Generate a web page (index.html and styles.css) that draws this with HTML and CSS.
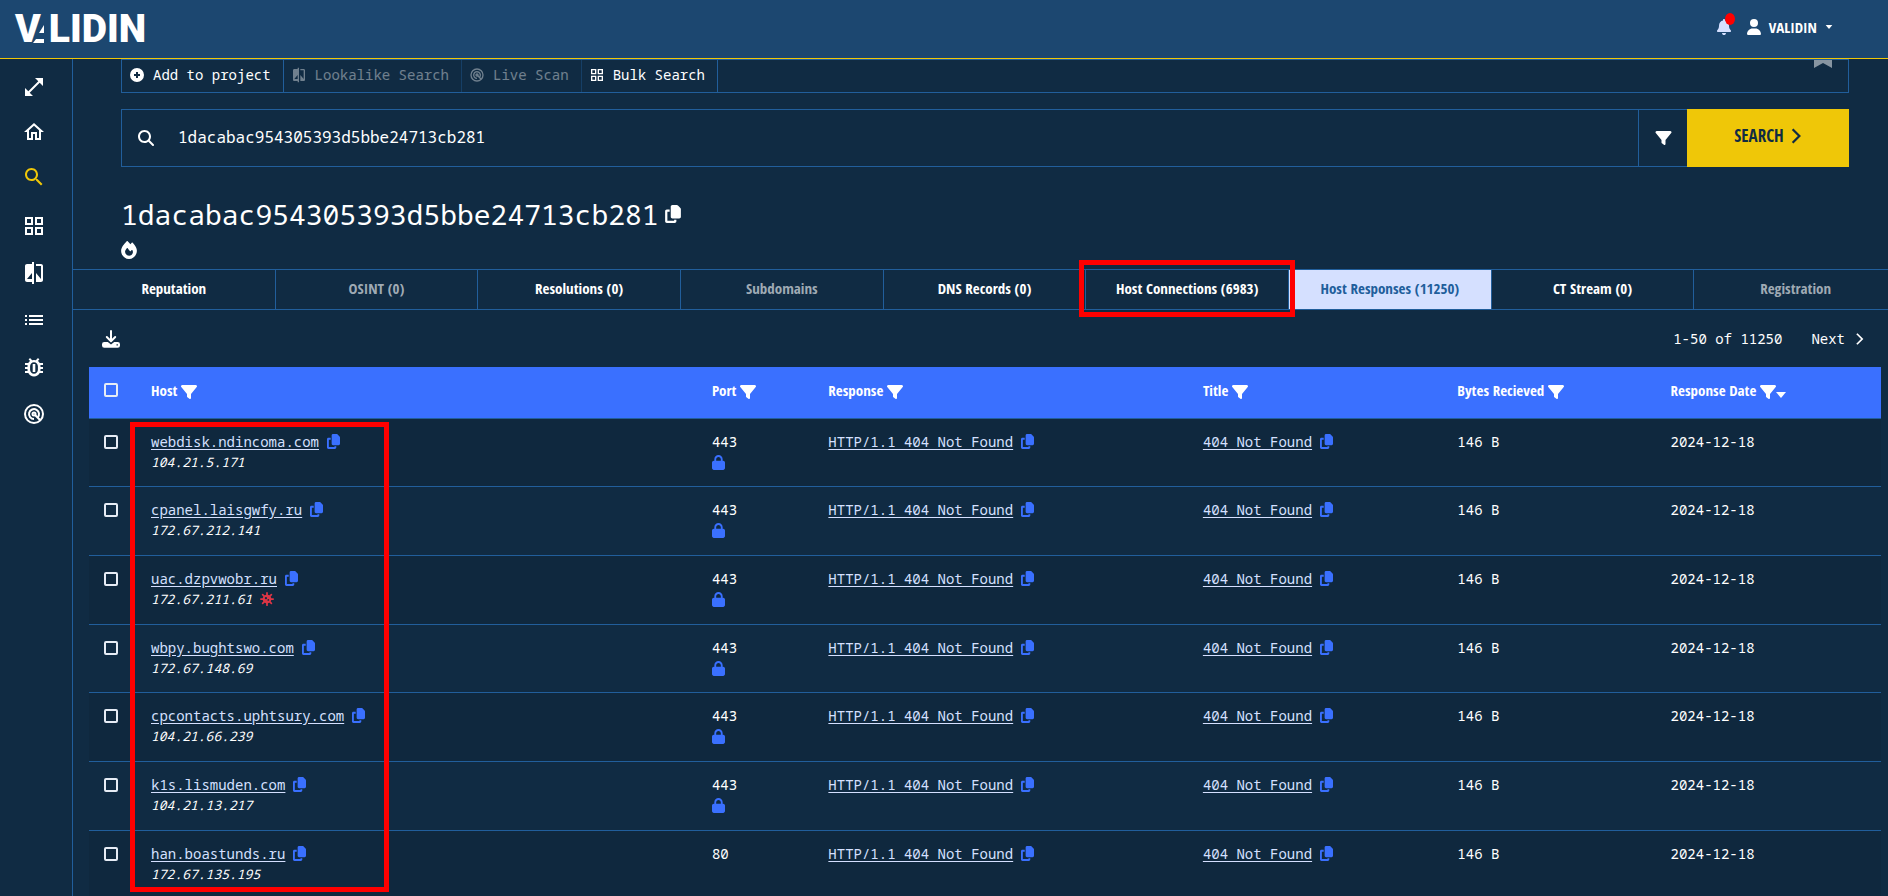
FILE: index.html
```
<!DOCTYPE html>
<html lang="en">
<head>
<meta charset="utf-8">
<title>Validin</title>
<link rel="stylesheet" href="styles.css">
</head>
<body>
<svg class="sprite" aria-hidden="true">
  <symbol id="expand" viewBox="0 0 24 24"><path d="M21 11V3h-8l3.29 3.29-10 10L3 13v8h8l-3.29-3.29 10-10z"/></symbol>
  <symbol id="home" viewBox="0 0 24 24"><path d="M12 5.69l5 4.5V18h-2v-6H9v6H7v-7.81l5-4.5M12 3L2 12h3v8h6v-6h2v6h6v-8h3L12 3z"/></symbol>
  <symbol id="find" viewBox="0 0 24 24"><path d="M15.5 14h-.79l-.28-.27C15.41 12.59 16 11.11 16 9.5 16 5.91 13.09 3 9.5 3S3 5.91 3 9.5 5.91 16 9.5 16c1.61 0 3.09-.59 4.23-1.57l.27.28v.79l5 4.99L20.49 19l-4.99-5zm-6 0C7.01 14 5 11.99 5 9.5S7.01 5 9.5 5 14 7.01 14 9.5 11.99 14 9.5 14z"/></symbol>
  <symbol id="grid" viewBox="0 0 24 24"><path d="M3 3v8h8V3H3zm6 6H5V5h4v4zm-6 4v8h8v-8H3zm6 6H5v-4h4v4zm4-16v8h8V3h-8zm6 6h-4V5h4v4zm-6 4v8h8v-8h-8zm6 6h-4v-4h4v4z"/></symbol>
  <symbol id="compare" viewBox="0 0 24 24"><path d="M10 3H5c-1.1 0-2 .9-2 2v14c0 1.1.9 2 2 2h5v2h2V1h-2v2zm0 15H5l5-6v6zm9-15h-5v2h5v13l-5-6v9h5c1.1 0 2-.9 2-2V5c0-1.1-.9-2-2-2z"/></symbol>
  <symbol id="list" viewBox="0 0 24 24"><path d="M3 13h2v-2H3v2zm0 4h2v-2H3v2zm0-8h2V7H3v2zm4 4h14v-2H7v2zm0 4h14v-2H7v2zM7 7v2h14V7H7z"/></symbol>
  <symbol id="bug" viewBox="0 0 24 24"><path fill-rule="evenodd" d="M21 8h-3.3c-.5-.9-1.1-1.5-1.9-2l1.6-1.6L16 3l-2.2 2.2a6.5 6.5 0 0 0-3.6 0L8 3 6.600 4.400 8.200 6c-.8.5-1.400 1.100-1.900 2H3v2h2.600L5.500 11v1H3v2h2.500v1l.1 1H3v2h3.300a6.500 6.500 0 0 0 11.400 0H21v-2h-2.600l.1-1v-1H21v-2h-2.500v-1l-.1-1H21zM12 7.200c2.200 0 3.900 1.700 3.900 4v3.600c0 2.300-1.700 4-3.900 4s-3.900-1.700-3.900-4v-3.600c0-2.300 1.700-4 3.900-4z"/><rect x="10.700" y="9" width="2.600" height="8"/></symbol>
  <symbol id="radar" viewBox="0 0 24 24"><g fill="none" stroke="currentColor" stroke-width="2"><circle cx="12" cy="12" r="9"/><path d="M15.600 15.600a5 5 0 1 0-3.600 1.500"/><circle cx="12" cy="12" r="1.500"/><path d="M12.800 12.800l5.500 5.500"/></g></symbol>
  <symbol id="plus" viewBox="0 0 16 16"><path fill-rule="evenodd" d="M8 1a7 7 0 1 1 0 14A7 7 0 0 1 8 1zM7 5v2H5v2h2v2h2V9h2V7H9V5z"/></symbol>
  <symbol id="loupe" viewBox="0 0 512 512"><path d="M416 208c0 45.900-14.900 88.300-40 122.700L502.600 457.400c12.500 12.500 12.500 32.800 0 45.300s-32.800 12.500-45.300 0L330.700 376c-34.400 25.200-76.800 40-122.700 40C93.100 416 0 322.900 0 208S93.100 0 208 0S416 93.100 416 208zM208 352a144 144 0 1 0 0-288 144 144 0 1 0 0 288z"/></symbol>
  <symbol id="filter" viewBox="0 32 512 448"><path d="M3.900 54.900C10.500 40.900 24.500 32 40 32H472c15.500 0 29.500 8.900 36.100 22.900s4.600 30.500-5.200 42.500L320 320.900V448c0 12.100-6.800 23.200-17.700 28.600s-23.800 4.300-33.500-3l-64-48c-8.100-6-12.800-15.500-12.800-25.600V320.900L9 97.300C-.7 85.400-2.800 68.800 3.900 54.900z"/></symbol>
  <symbol id="copy" viewBox="0 0 448 512"><path d="M208 0H332.100c12.700 0 24.900 5.100 33.900 14.100l67.900 67.900c9 9 14.100 21.200 14.100 33.900V336c0 26.500-21.500 48-48 48H208c-26.500 0-48-21.500-48-48V48c0-26.500 21.500-48 48-48zM48 128h80v64H64V448H256V416h64v48c0 26.500-21.500 48-48 48H48c-26.500 0-48-21.500-48-48V176c0-26.500 21.500-48 48-48z"/></symbol>
  <symbol id="lock" viewBox="0 0 448 512"><path d="M144 144v48H304V144c0-44.200-35.800-80-80-80s-80 35.800-80 80zM80 192V144C80 64.500 144.500 0 224 0s144 64.500 144 144v48h16c35.300 0 64 28.700 64 64V448c0 35.300-28.700 64-64 64H64c-35.300 0-64-28.700-64-64V256c0-35.300 28.700-64 64-64H80z"/></symbol>
  <symbol id="bell" viewBox="0 0 448 512"><path d="M224 0c-17.700 0-32 14.300-32 32V51.200C119 66 64 130.600 64 208v18.800c0 47-17.300 92.400-48.500 127.600l-7.400 8.300c-8.400 9.400-10.400 22.900-5.300 34.400S19.400 416 32 416H416c12.600 0 24-7.400 29.200-18.900s3.100-25-5.300-34.400l-7.400-8.300C401.300 319.200 384 273.900 384 226.800V208c0-77.400-55-142-128-156.800V32c0-17.700-14.300-32-32-32zm45.300 493.300c12-12 18.700-28.300 18.700-45.300H160c0 17 6.700 33.300 18.700 45.300s28.300 18.700 45.300 18.700s33.300-6.700 45.300-18.700z"/></symbol>
  <symbol id="user" viewBox="0 0 448 512"><path d="M224 256A128 128 0 1 0 224 0a128 128 0 1 0 0 256zm-45.700 48C79.800 304 0 383.800 0 482.300C0 498.700 13.300 512 29.700 512H418.300c16.400 0 29.700-13.300 29.700-29.700C448 383.800 368.200 304 269.700 304H178.300z"/></symbol>
  <symbol id="fire" viewBox="0 0 448 512"><path d="M159.300 5.400c7.800-7.300 19.900-7.200 27.700 .1c27.600 25.900 53.500 53.800 77.700 84c11-14.400 23.500-30.100 37-42.900c7.900-7.400 20.100-7.400 28 .1c34.600 33 63.900 76.600 84.500 118c20.300 40.800 33.800 82.500 33.800 111.900C448 404.200 348.200 512 224 512C98.400 512 0 404.100 0 276.500c0-38.400 17.800-85.300 45.400-131.700C73.300 97.700 112.700 48.600 159.300 5.400zM225.700 416c25.300 0 47.700-7 68.800-21c42.100-29.400 53.400-88.200 28.100-134.400c-4.500-9-16-9.600-22.500-2l-25.200 29.300c-6.600 7.600-18.500 7.400-24.700-.5c-16.500-21-46-58.500-62.800-79.800c-6.300-8-18.300-8.100-24.700-.1c-33.800 42.500-50.800 69.300-50.800 99.400C112 375.400 162.600 416 225.700 416z"/></symbol>
  <symbol id="download" viewBox="0 0 18 18"><path d="M9 1v9.500M4.800 7l4.200 4.200L13.200 7" fill="none" stroke="currentColor" stroke-width="2" stroke-linecap="round" stroke-linejoin="round"/><path fill-rule="evenodd" d="M2.300 12h3.500L9 14.500l3.200-2.500h3.500a2.300 2.300 0 0 1 2.300 2.300v1.200a2.300 2.300 0 0 1-2.300 2.300H2.300A2.300 2.300 0 0 1 0 15.500v-1.200A2.300 2.300 0 0 1 2.300 12zm12.200 2.200v1.400h1.400v-1.400z"/></symbol>
  <symbol id="chevron" viewBox="0 0 10 16"><path d="M2 2l6 6-6 6" fill="none" stroke="currentColor" stroke-width="2"/></symbol>
  <symbol id="caret" viewBox="0 0 10 6"><path d="M0 0h10L5 6z"/></symbol>
  <symbol id="virus" viewBox="0 0 16 16"><g fill="none" stroke="currentColor" stroke-linecap="round"><path stroke-width="2" d="M8 1v14M1 8h14M3 3l10 10M13 3L3 13"/></g><circle cx="8" cy="8" r="5"/><circle class="spot" cx="6.800" cy="7" r="1.300"/><circle class="spot" cx="9.500" cy="9" r="1"/></symbol>
</svg>

<header class="topbar">
  <a class="logo" href="#" aria-label="Validin"><span>V</span><svg class="logo-mark" viewBox="0 0 12 20"><path d="M12 2v8H7zM4 16h8v4H1z"/></svg><span>LIDIN</span></a>
  <div class="account">
    <button class="bell" aria-label="Notifications"><svg width="14" height="16"><use href="#bell"/></svg><span class="dot"></span></button>
    <button class="user"><svg width="14" height="16"><use href="#user"/></svg><span>VALIDIN</span><svg width="8" height="4"><use href="#caret"/></svg></button>
  </div>
</header>

<div class="shell">
  <nav class="sidebar" aria-label="Main">
    <div class="nav-top">
      <a href="#" aria-label="Expand"><svg><use href="#expand"/></svg></a>
      <a href="#" aria-label="Home"><svg><use href="#home"/></svg></a>
      <a href="#" aria-label="Search" class="current"><svg><use href="#find"/></svg></a>
    </div>
    <div class="nav-tools">
      <a href="#" aria-label="Bulk search"><svg><use href="#grid"/></svg></a>
      <a href="#" aria-label="Lookalikes"><svg><use href="#compare"/></svg></a>
      <a href="#" aria-label="Projects"><svg><use href="#list"/></svg></a>
      <a href="#" aria-label="Threats"><svg><use href="#bug"/></svg></a>
      <a href="#" aria-label="Live scan"><svg><use href="#radar"/></svg></a>
    </div>
  </nav>

  <main class="main">
    <section class="query">
      <div class="toolbar">
        <button><svg><use href="#plus"/></svg>Add to project</button>
        <button disabled><svg><use href="#compare"/></svg>Lookalike Search</button>
        <button disabled><svg><use href="#radar"/></svg>Live Scan</button>
        <button><svg><use href="#grid"/></svg>Bulk Search</button>
        <svg class="bookmark" viewBox="0 0 18 8"><path d="M0 0h18v8L9 3 0 8z"/></svg>
      </div>
      <form class="searchbox">
        <label for="q" aria-label="Search"><svg width="16" height="16"><use href="#loupe"/></svg></label>
        <input id="q" type="text" value="1dacabac954305393d5bbe24713cb281">
        <button type="button" class="filter-btn" aria-label="Filter"><svg width="17" height="14"><use href="#filter"/></svg></button>
        <button type="button" class="search-btn">SEARCH <svg width="12" height="18"><use href="#chevron"/></svg></button>
      </form>
      <div class="title"><h1>1dacabac954305393d5bbe24713cb281</h1><button aria-label="Copy"><svg width="16" height="18"><use href="#copy"/></svg></button></div>
      <div class="flags"><svg width="16" height="18"><use href="#fire"/></svg></div>
    </section>

    <div class="tabs" role="tablist">
      <button role="tab">Reputation</button>
      <button role="tab" disabled>OSINT (0)</button>
      <button role="tab">Resolutions (0)</button>
      <button role="tab" disabled>Subdomains</button>
      <button role="tab">DNS Records (0)</button>
      <button role="tab" class="marked">Host Connections (6983)<span class="mark"></span></button>
      <button role="tab" class="active" aria-selected="true">Host Responses (11250)</button>
      <button role="tab">CT Stream (0)</button>
      <button role="tab" disabled>Registration</button>
    </div>

    <div class="pager">
      <button aria-label="Download"><svg width="18" height="18"><use href="#download"/></svg></button>
      <span class="range">1-50 of 11250</span>
      <button class="next">Next <svg width="9" height="14"><use href="#chevron"/></svg></button>
    </div>

    <div class="results">
      <table>
        <colgroup><col class="c-check"><col class="c-host"><col class="c-port"><col class="c-resp"><col class="c-title"><col class="c-bytes"><col></colgroup>
        <thead>
          <tr>
            <th><input type="checkbox" aria-label="Select all"></th>
            <th>Host <svg><use href="#filter"/></svg></th>
            <th>Port <svg><use href="#filter"/></svg></th>
            <th>Response <svg><use href="#filter"/></svg></th>
            <th>Title <svg><use href="#filter"/></svg></th>
            <th>Bytes Recieved <svg><use href="#filter"/></svg></th>
            <th>Response Date <svg><use href="#filter"/></svg><svg class="sort"><use href="#caret"/></svg></th>
          </tr>
        </thead>
        <tbody>
          <tr>
            <td><input type="checkbox" aria-label="Select row"></td>
            <td><div class="line"><a href="#">webdisk.ndincoma.com</a><svg><use href="#copy"/></svg></div><div class="ip">104.21.5.171</div></td>
            <td><div class="line">443</div><svg class="lock"><use href="#lock"/></svg></td>
            <td><div class="line"><a href="#">HTTP/1.1 404 Not Found</a><svg><use href="#copy"/></svg></div></td>
            <td><div class="line"><a href="#">404 Not Found</a><svg><use href="#copy"/></svg></div></td>
            <td><div class="line">146 B</div></td>
            <td><div class="line">2024-12-18</div></td>
          </tr>
          <tr>
            <td><input type="checkbox" aria-label="Select row"></td>
            <td><div class="line"><a href="#">cpanel.laisgwfy.ru</a><svg><use href="#copy"/></svg></div><div class="ip">172.67.212.141</div></td>
            <td><div class="line">443</div><svg class="lock"><use href="#lock"/></svg></td>
            <td><div class="line"><a href="#">HTTP/1.1 404 Not Found</a><svg><use href="#copy"/></svg></div></td>
            <td><div class="line"><a href="#">404 Not Found</a><svg><use href="#copy"/></svg></div></td>
            <td><div class="line">146 B</div></td>
            <td><div class="line">2024-12-18</div></td>
          </tr>
          <tr>
            <td><input type="checkbox" aria-label="Select row"></td>
            <td><div class="line"><a href="#">uac.dzpvwobr.ru</a><svg><use href="#copy"/></svg></div><div class="ip">172.67.211.61<svg class="virus"><use href="#virus"/></svg></div></td>
            <td><div class="line">443</div><svg class="lock"><use href="#lock"/></svg></td>
            <td><div class="line"><a href="#">HTTP/1.1 404 Not Found</a><svg><use href="#copy"/></svg></div></td>
            <td><div class="line"><a href="#">404 Not Found</a><svg><use href="#copy"/></svg></div></td>
            <td><div class="line">146 B</div></td>
            <td><div class="line">2024-12-18</div></td>
          </tr>
          <tr>
            <td><input type="checkbox" aria-label="Select row"></td>
            <td><div class="line"><a href="#">wbpy.bughtswo.com</a><svg><use href="#copy"/></svg></div><div class="ip">172.67.148.69</div></td>
            <td><div class="line">443</div><svg class="lock"><use href="#lock"/></svg></td>
            <td><div class="line"><a href="#">HTTP/1.1 404 Not Found</a><svg><use href="#copy"/></svg></div></td>
            <td><div class="line"><a href="#">404 Not Found</a><svg><use href="#copy"/></svg></div></td>
            <td><div class="line">146 B</div></td>
            <td><div class="line">2024-12-18</div></td>
          </tr>
          <tr>
            <td><input type="checkbox" aria-label="Select row"></td>
            <td><div class="line"><a href="#">cpcontacts.uphtsury.com</a><svg><use href="#copy"/></svg></div><div class="ip">104.21.66.239</div></td>
            <td><div class="line">443</div><svg class="lock"><use href="#lock"/></svg></td>
            <td><div class="line"><a href="#">HTTP/1.1 404 Not Found</a><svg><use href="#copy"/></svg></div></td>
            <td><div class="line"><a href="#">404 Not Found</a><svg><use href="#copy"/></svg></div></td>
            <td><div class="line">146 B</div></td>
            <td><div class="line">2024-12-18</div></td>
          </tr>
          <tr>
            <td><input type="checkbox" aria-label="Select row"></td>
            <td><div class="line"><a href="#">k1s.lismuden.com</a><svg><use href="#copy"/></svg></div><div class="ip">104.21.13.217</div></td>
            <td><div class="line">443</div><svg class="lock"><use href="#lock"/></svg></td>
            <td><div class="line"><a href="#">HTTP/1.1 404 Not Found</a><svg><use href="#copy"/></svg></div></td>
            <td><div class="line"><a href="#">404 Not Found</a><svg><use href="#copy"/></svg></div></td>
            <td><div class="line">146 B</div></td>
            <td><div class="line">2024-12-18</div></td>
          </tr>
          <tr>
            <td><input type="checkbox" aria-label="Select row"></td>
            <td><div class="line"><a href="#">han.boastunds.ru</a><svg><use href="#copy"/></svg></div><div class="ip">172.67.135.195</div></td>
            <td><div class="line">80</div></td>
            <td><div class="line"><a href="#">HTTP/1.1 404 Not Found</a><svg><use href="#copy"/></svg></div></td>
            <td><div class="line"><a href="#">404 Not Found</a><svg><use href="#copy"/></svg></div></td>
            <td><div class="line">146 B</div></td>
            <td><div class="line">2024-12-18</div></td>
          </tr>
        </tbody>
      </table>
      <span class="mark host-mark"></span>
    </div>
  </main>
</div>
</body>
</html>
```
FILE: styles.css
```
:root {
  --bg: #102b43;
  --bar: #1c4770;
  --line: #215e9b;
  --blue: #3a70ff;
  --yellow: #efc708;
  --pale: #d5e0ff;
  --mono: "Noto Sans Mono", "DejaVu Sans Mono", monospace;
  --cond: "Open Sans Condensed", "Roboto Condensed", "Open Sans", sans-serif;
}

* { box-sizing: border-box; }

body {
  margin: 0;
  height: 100vh;
  overflow: hidden;
  display: flex;
  flex-direction: column;
  background: var(--bg);
  color: #fff;
  font: 14px/20px var(--mono);
}

svg { fill: currentColor; flex: none; }
.sprite { position: absolute; width: 0; height: 0; }

button {
  margin: 0;
  padding: 0;
  border: 0;
  background: none;
  color: inherit;
  font: inherit;
}

/* Top bar */
.topbar {
  flex: none;
  display: flex;
  align-items: center;
  justify-content: space-between;
  height: 59px;
  padding: 0 55px 0 15px;
  background: var(--bar);
  border-bottom: 1px solid var(--yellow);
}

.logo {
  display: flex;
  align-items: center;
  color: #fff;
  font: 900 39px/40px Roboto, sans-serif;
  text-decoration: none;
}
.logo-mark { width: 12px; height: 20px; margin: 8px 5px 0 -9px; }

.account { display: flex; gap: 16px; align-items: center; padding-bottom: 5px; }
.bell { position: relative; display: flex; color: var(--pale); }
.dot {
  position: absolute;
  top: -6px;
  right: -4px;
  width: 10px;
  height: 12px;
  border-radius: 50%;
  background: #f00;
}
.user { display: flex; align-items: center; gap: 8px; font: bold 15px/20px var(--cond); }

/* Sidebar */
.shell { flex: 1; min-height: 0; display: flex; }
.sidebar {
  flex: none;
  width: 73px;
  padding: 5px 16px 0 0;
  border-right: 1px solid var(--line);
}
.sidebar a { display: flex; align-items: center; justify-content: center; color: #fff; }
.sidebar svg { width: 24px; height: 24px; margin-left: 12px; }
.nav-top a { height: 45px; }
.nav-tools { padding-top: 3px; }
.nav-tools a { height: 47px; }
.sidebar .current { color: var(--yellow); }

.main { flex: 1; min-width: 0; overflow: hidden; }

/* Query area */
.query { padding: 0 39px 0 48px; }

.toolbar {
  display: flex;
  height: 34px;
  border: 1px solid var(--line);
}
.toolbar button {
  display: flex;
  align-items: center;
  gap: 8px;
  padding: 0 12px 2px 7px;
  border-right: 1px solid var(--line);
}
.toolbar button svg { width: 16px; height: 16px; }
.toolbar button:disabled { opacity: .4; }
.bookmark { width: 18px; height: 8px; margin: 0 16px 0 auto; color: #8795a1; }

.searchbox {
  display: flex;
  height: 58px;
  margin: 16px 0 0;
  border: 1px solid var(--line);
  border-right: 0;
}
.searchbox label { display: flex; align-items: center; padding: 0 22px 0 16px; }
.searchbox input {
  flex: 1;
  min-width: 0;
  padding: 0 2px 2px;
  border: 0;
  outline: 0;
  background: none;
  color: #fff;
  font: 16px/24px var(--mono);
}
.filter-btn {
  display: flex;
  align-items: center;
  justify-content: center;
  width: 49px;
  border-left: 1px solid var(--line);
}
.search-btn {
  display: flex;
  align-items: center;
  justify-content: center;
  gap: 6px;
  width: 162px;
  margin: -1px 0;
  padding-bottom: 4px;
  background: var(--yellow);
  color: #102b43;
  font: bold 17px/24px var(--cond);
}

.title { display: flex; align-items: center; gap: 6px; margin-top: 26px; }
.title h1 { margin: 0; font: 28px/42px var(--mono); }
.title button { display: flex; }
.flags { display: flex; padding: 6px 0 10px; }

/* Tabs */
.tabs {
  display: grid;
  grid-template-columns: repeat(9, 1fr);
  margin-right: -9px;
}
.tabs button {
  position: relative;
  height: 41px;
  padding-bottom: 4px;
  border: solid var(--line);
  border-width: 1px 1px 1px 0;
  font: bold 15px/20px var(--cond);
}
.tabs button:last-child { border-right: 0; }
.tabs button:disabled { color: #9faab4; }
.tabs .active { background: var(--pale); color: #215e9b; }
.tabs .marked { z-index: 1; }

.mark { position: absolute; border: 5px solid #f00; pointer-events: none; }
.marked .mark { inset: -10px -7px -8px -7px; }
.host-mark { top: 55px; left: 41px; width: 259px; height: 470px; }

/* Pager */
.pager { display: flex; align-items: center; height: 57px; padding: 1px 24px 0 29px; }
.pager button { display: flex; align-items: center; gap: 10px; }
.range { margin-left: auto; }
.pager .next { margin-left: 29px; }

/* Results */
.results { position: relative; margin: 0 7px 0 16px; }
table { width: 100%; table-layout: fixed; border-collapse: collapse; }
.c-check { width: 54px; }
.c-host { width: 31.3%; }
.c-port { width: 6.5%; }
.c-resp { width: 20.9%; }
.c-title { width: 14.2%; }
.c-bytes { width: 11.9%; }

th, td { padding: 0 8px; text-align: left; border-bottom: 1px solid var(--line); }
th {
  height: 51px;
  padding-bottom: 5px;
  background: var(--blue);
  font: bold 15px/20px var(--cond);
}
th svg { width: 16px; height: 14px; vertical-align: middle; }
th .sort { width: 10px; height: 6px; margin-top: 7px; }

td { height: 69px; padding-top: 12px; vertical-align: top; }
tbody tr:nth-child(3n+1) td { height: 68px; }
tbody tr:nth-child(odd) { background: #0f283e; }
th:first-child, td:first-child { padding-left: 15px; }

.line { display: flex; align-items: center; gap: 8px; line-height: 22px; }
.line a { color: var(--pale); text-underline-offset: 2px; }
.line svg { width: 13px; height: 15px; color: var(--blue); }
.ip { display: flex; align-items: center; gap: 8px; font: italic 13px/18px var(--mono); }
.lock { display: block; width: 13px; height: 15px; margin-top: 2px; color: var(--blue); }
.virus { width: 14px; height: 14px; color: #dc3545; }
.spot { fill: var(--bg); }

input[type="checkbox"] {
  appearance: none;
  display: block;
  width: 14px;
  height: 14px;
  margin: 0;
  border: 2px solid #e6ecf5;
  border-radius: 2px;
}
td input[type="checkbox"] { margin-top: 4px; }
```
